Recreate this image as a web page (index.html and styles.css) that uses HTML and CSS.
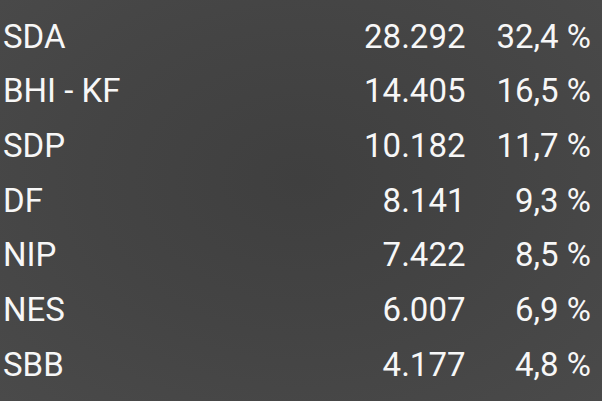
FILE: index.html
```html
<!DOCTYPE html>
<html lang="bs">
<head>
<meta charset="utf-8">
<title>Rezultati</title>
<link rel="stylesheet" href="styles.css">
</head>
<body>
<div class="results">
  <div class="name">SDA</div><div class="votes">28.292</div><div class="pct">32,4 %</div>
  <div class="name">BHI - KF</div><div class="votes">14.405</div><div class="pct">16,5 %</div>
  <div class="name">SDP</div><div class="votes">10.182</div><div class="pct">11,7 %</div>
  <div class="name">DF</div><div class="votes">8.141</div><div class="pct">9,3 %</div>
  <div class="name">NIP</div><div class="votes">7.422</div><div class="pct">8,5 %</div>
  <div class="name">NES</div><div class="votes">6.007</div><div class="pct">6,9 %</div>
  <div class="name">SBB</div><div class="votes">4.177</div><div class="pct">4,8 %</div>
</div>
</body>
</html>
```
FILE: styles.css
```css
html, body {
  margin: 0;
  padding: 0;
  width: 602px;
  height: 401px;
  overflow: hidden;
}
body {
  background: radial-gradient(ellipse at 50% 45%, #3f3f3f 0%, #444444 50%, #4a4a4a 100%);
  font-family: Roboto, "Liberation Sans", sans-serif;
  color: #f7f7f7;
}
.results {
  display: grid;
  grid-template-columns: 1fr auto auto;
  column-gap: 31px;
  padding: 9.5px 11px 0 3px;
  font-size: 33px;
  line-height: 54.67px;
}
.votes, .pct {
  text-align: right;
}
```
